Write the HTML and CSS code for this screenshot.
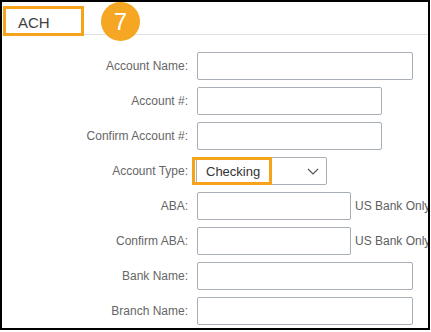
FILE: index.html
```html
<!DOCTYPE html>
<html lang="en">
  <head>
    <meta charset="UTF-8" />
    <title>ACH</title>
    <link rel="stylesheet" href="styles.css">
  </head>
  <body>
    <div class="frame">
      <header class="head">
        <div class="tab">ACH</div>
        <div class="step">7</div>
      </header>

      <form class="form">
        <label class="lbl">Account Name:</label>
        <div class="cell"><input class="field wide" type="text" /></div>

        <label class="lbl">Account #:</label>
        <div class="cell"><input class="field mid" type="text" /></div>

        <label class="lbl">Confirm Account #:</label>
        <div class="cell"><input class="field mid" type="text" /></div>

        <label class="lbl">Account Type:</label>
        <div class="cell">
          <div class="select">
            <span class="pick">Checking</span>
            <svg class="chev" width="12" height="7" viewBox="0 0 12 7">
              <polyline points="1,1 6,6 11,1" fill="none" stroke="#555" stroke-width="1.2" />
            </svg>
          </div>
        </div>

        <label class="lbl">ABA:</label>
        <div class="cell"><input class="field short" type="text" /><span class="note">US Bank Only</span></div>

        <label class="lbl">Confirm ABA:</label>
        <div class="cell"><input class="field short" type="text" /><span class="note">US Bank Only</span></div>

        <label class="lbl">Bank Name:</label>
        <div class="cell"><input class="field wide" type="text" /></div>

        <label class="lbl">Branch Name:</label>
        <div class="cell"><input class="field wide" type="text" /></div>
      </form>
    </div>
  </body>
</html>
```

FILE: styles.css
```css
body {
  margin: 0;
  background: #fff;
  font-family: "Liberation Sans", Arial, sans-serif;
}

.frame {
  width: 430px;
  height: 330px;
  box-sizing: border-box;
  border: 2px solid #000;
  overflow: hidden;
}

/* header strip with tab + step badge */
.head {
  display: flex;
  align-items: flex-start;
  height: 32px;
  border-bottom: 1px solid #e2e2e2;
}

.tab {
  width: 81px;
  height: 30px;
  box-sizing: border-box;
  margin: 4px 0 0 1px;
  padding: 5px 0 0 12px;
  border: 3px solid #f5a31a;
  background: #fff;
  color: #404040;
  font-size: 15px;
}

.step {
  width: 39px;
  height: 39px;
  margin-left: 17px;
  border-radius: 50%;
  background: #f5a623;
  color: #fff;
  font-size: 24px;
  line-height: 39px;
  text-align: center;
}

.form {
  display: grid;
  grid-template-columns: 186px auto;
  column-gap: 9px;
  row-gap: 7px;
  margin-top: 17px;
}

.lbl {
  font-size: 12px;
  color: #666;
  text-align: right;
  line-height: 28px;
}

.cell {
  display: flex;
  align-items: center;
  height: 28px;
}

.field {
  height: 28px;
  box-sizing: border-box;
  border: 1px solid #a7aeb5;
  border-radius: 2px;
  margin: 0;
  padding: 0 8px;
}

.wide {
  width: 216px;
}

.mid {
  width: 185px;
}

.short {
  width: 154px;
}

.note {
  margin-left: 4px;
  font-size: 12px;
  color: #5e5e5e;
  white-space: nowrap;
}

.select {
  position: relative;
  display: flex;
  align-items: center;
  justify-content: space-between;
  width: 131px;
  height: 28px;
  box-sizing: border-box;
  margin-left: -1px;
  border: 1px solid #a7aeb5;
  border-radius: 2px;
  padding: 0 6px 0 0;
}

/* orange highlight around the chosen value */
.pick {
  display: flex;
  align-items: center;
  width: 80px;
  height: 28px;
  box-sizing: border-box;
  margin: -1px 0 -1px -5px;
  padding-left: 11px;
  border: 3px solid #f5a31a;
  color: #333;
  font-size: 13px;
}

.chev {
  margin-right: 1px;
}
```
